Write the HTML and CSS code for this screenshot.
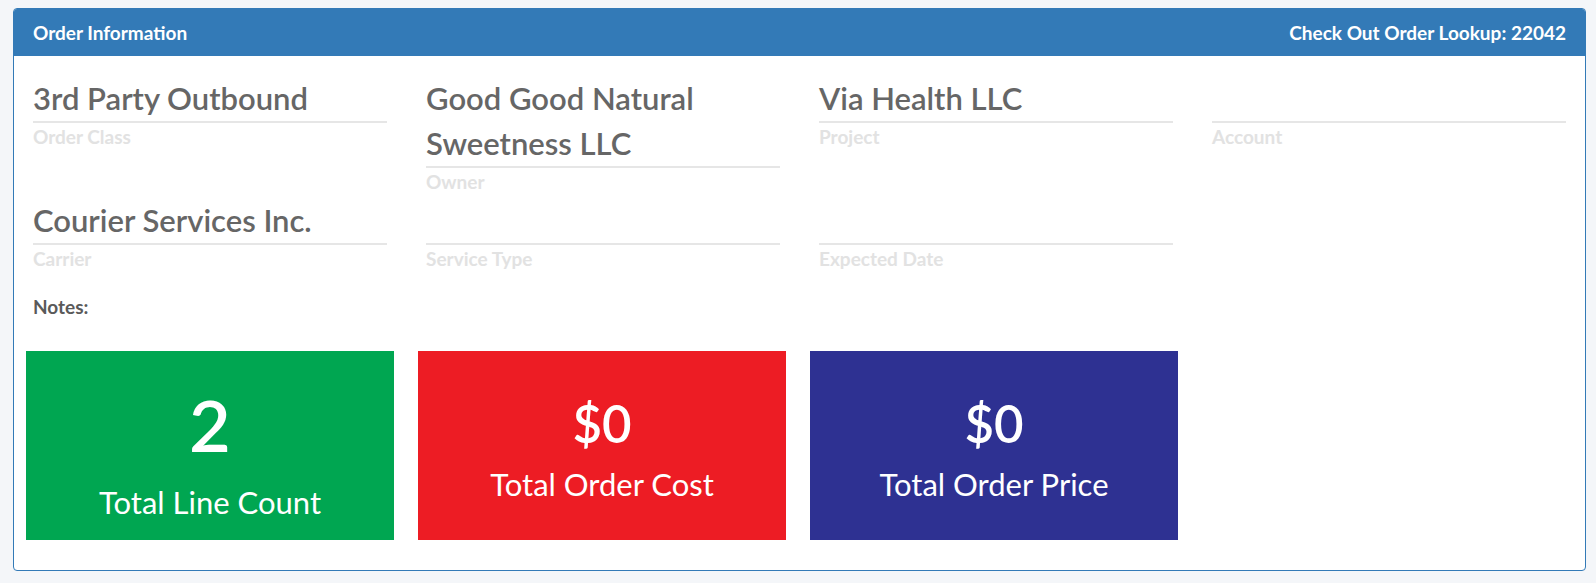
FILE: index.html
```html
<!DOCTYPE html>
<html lang="en">
<head>
<meta charset="utf-8">
<title>Order Information</title>
<link rel="stylesheet" href="styles.css">
</head>
<body>
<div class="page">
  <section class="card">
    <header class="card-header">
      <span class="card-title">Order Information</span>
      <span class="card-title">Check Out Order Lookup: 22042</span>
    </header>
    <div class="card-body">
      <div class="fields">
        <div class="field">
          <div class="field-value">3rd Party Outbound</div>
          <div class="field-label">Order Class</div>
        </div>
        <div class="field">
          <div class="field-value">Good Good Natural Sweetness LLC</div>
          <div class="field-label">Owner</div>
        </div>
        <div class="field">
          <div class="field-value">Via Health LLC</div>
          <div class="field-label">Project</div>
        </div>
        <div class="field">
          <div class="field-value"></div>
          <div class="field-label">Account</div>
        </div>
        <div class="field">
          <div class="field-value">Courier Services Inc.</div>
          <div class="field-label">Carrier</div>
        </div>
        <div class="field">
          <div class="field-value"></div>
          <div class="field-label">Service Type</div>
        </div>
        <div class="field">
          <div class="field-value"></div>
          <div class="field-label">Expected Date</div>
        </div>
      </div>
      <div class="notes">Notes:</div>
      <div class="tiles">
        <div class="tile tile-green">
          <div class="tile-number tile-number-lg">2</div>
          <div class="tile-label">Total Line Count</div>
        </div>
        <div class="tile tile-red">
          <div class="tile-number">$0</div>
          <div class="tile-label">Total Order Cost</div>
        </div>
        <div class="tile tile-blue">
          <div class="tile-number">$0</div>
          <div class="tile-label">Total Order Price</div>
        </div>
      </div>
    </div>
  </section>
</div>
</body>
</html>
```

FILE: styles.css
```css
* {
  box-sizing: border-box;
}

html, body {
  margin: 0;
  padding: 0;
  background: #f4f6f9;
}

body {
  font-family: "Lato", "Source Sans Pro", "Noto Sans", sans-serif;
  color: #666;
}

.page {
  padding: 8px 10px 13px 13px;
}

.card {
  background: #fff;
  border: 1px solid #337ab7;
  border-radius: 4px;
  overflow: hidden;
}

.card-header {
  height: 47px;
  background: #337ab7;
  display: flex;
  justify-content: space-between;
  align-items: center;
  padding: 0 19px 0 19px;
}

.card-title {
  color: #fff;
  font-weight: 700;
  font-size: 19px;
  line-height: 24px;
}

.card-body {
  padding: 20px 12px 30px 12px;
}

.fields {
  display: grid;
  grid-template-columns: repeat(4, 1fr);
  column-gap: 25px;
}

.field {
  padding: 0 7px;
  margin-bottom: 5px;
}

.field-value {
  min-height: 47px;
  font-size: 31px;
  line-height: 45px;
  font-weight: 600;
  color: #666;
  border-bottom: 2px solid #e6e6e6;
}

.field-label {
  padding-top: 3px;
  font-size: 19px;
  line-height: 22px;
  font-weight: 700;
  color: #e2e2e2;
}

.notes {
  margin-top: 21px;
  padding-left: 7px;
  font-size: 19px;
  line-height: 22px;
  font-weight: 700;
  color: #5a5a5a;
}

.tiles {
  margin-top: 33px;
  display: grid;
  grid-template-columns: repeat(4, 368px);
  column-gap: 24px;
}

.tile {
  height: 189px;
  display: flex;
  flex-direction: column;
  justify-content: center;
  align-items: center;
  color: #fff;
}

.tile-green {
  background: #00a651;
}

.tile-red {
  background: #ed1c24;
}

.tile-blue {
  background: #2e3192;
}

.tile-number {
  font-size: 51px;
  line-height: 76px;
  font-weight: 600;
}

.tile-number-lg {
  font-size: 72px;
  line-height: 112px;
}

.tile-label {
  font-size: 31px;
  line-height: 44px;
  font-weight: 400;
}
```
